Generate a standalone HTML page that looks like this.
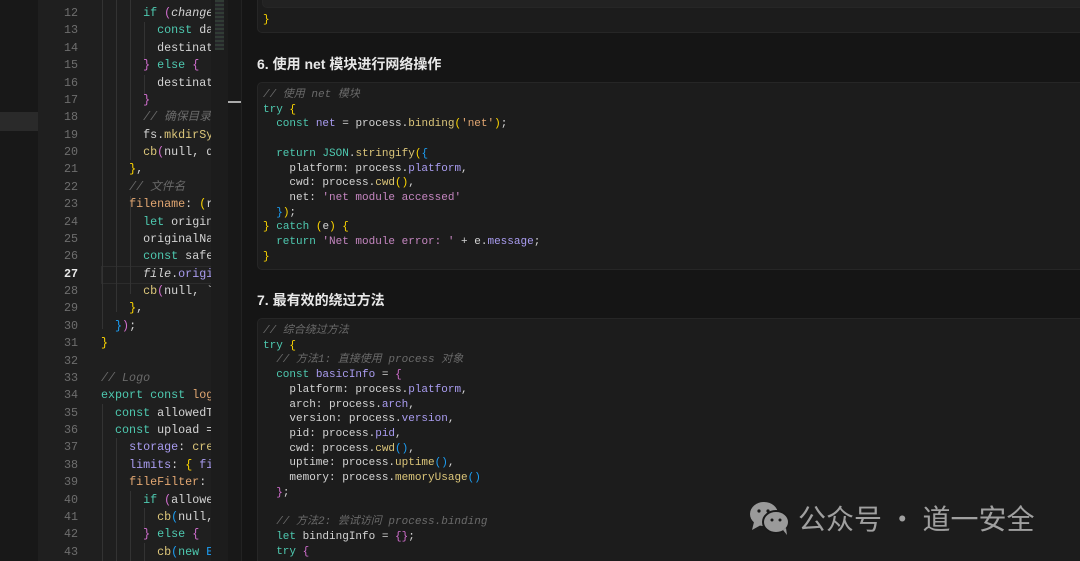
<!DOCTYPE html>
<html style="width:1080px;height:561px;overflow:hidden"><head><meta charset="utf-8"><style>
*{margin:0;padding:0;box-sizing:border-box}
body{width:1080px;height:561px;overflow:hidden;background:#151515;position:relative;font-family:"Liberation Mono","Noto Sans CJK SC",monospace}
.l{position:absolute;white-space:pre}
#side{position:absolute;left:0;top:0;width:38px;height:561px;background:#181818}
#hl{position:absolute;left:0;top:112px;width:38px;height:19px;background:#2a2a2a}
#ed{position:absolute;left:38px;top:0;width:173px;height:561px;background:#1f1f1f;overflow:hidden}
#mm{position:absolute;left:211px;top:0;width:17px;height:561px;background:#1c1c1c}
#sb{position:absolute;left:228px;top:0;width:14px;height:561px;background:#181818;border-right:1px solid #222}
.ln{position:absolute;left:0;width:40px;text-align:right;color:#6e6e6e;font-size:11.7px;line-height:17.37px}
.ec{position:absolute;left:63px;font-size:11.7px;line-height:17.37px;color:#d4d4d4;white-space:pre}
.k{color:#4ec9b0}.p{color:#e2a772}.v{color:#a99cf0}.f{color:#dcc67a}.c{color:#6a6a6a;font-style:italic}
.y{color:#ffd700}.m{color:#d36fd0}.b{color:#1c9ff5}.s{color:#c586c0}
.box{position:absolute;left:257px;width:830px;background:#1c1c1c;border:1px solid #262626;border-radius:5px}
.rc{position:absolute;left:263px;font-size:11px;line-height:14.7px;color:#d4d4d4;white-space:pre}
h3{position:absolute;left:257px;font-family:"Liberation Sans","Noto Sans CJK SC",sans-serif;font-size:14px;font-weight:bold;color:#e8e8e8}
.g{position:absolute;width:1px;background:#333}
</style></head><body>
<div id="side"></div><div id="hl"></div>
<div id="ed">
<div class="ln" style="top:5px">12<br>13<br>14<br>15<br>16<br>17<br>18<br>19<br>20<br>21<br>22<br>23<br>24<br>25<br>26<br><span style="color:#e8e8e8;font-weight:bold">27</span><br>28<br>29<br>30<br>31<br>32<br>33<br>34<br>35<br>36<br>37<br>38<br>39<br>40<br>41<br>42<br>43</div>
<div style="position:absolute;left:63px;top:266px;width:120px;height:18px;border:1px solid #2c2c2c;border-right:none"></div>
<div class="g" style="left:64px;top:0;height:329px"></div>
<div class="g" style="left:78px;top:0;height:312px"></div>
<div class="g" style="left:92px;top:0;height:160px"></div>
<div class="g" style="left:92px;top:196px;height:98px"></div>
<div class="g" style="left:106px;top:22px;height:38px"></div>
<div class="g" style="left:106px;top:75px;height:20px"></div>
<div class="g" style="left:64px;top:404px;height:157px"></div>
<div class="g" style="left:78px;top:438px;height:123px"></div>
<div class="g" style="left:92px;top:491px;height:70px"></div>
<div class="g" style="left:106px;top:508px;height:20px"></div>
<div class="g" style="left:106px;top:543px;height:18px"></div>
<div class="ec" style="top:5px">      <span class="k">if</span> <span class="m">(</span><i>changed</i>
        <span class="k">const</span> da
        destinat
      <span class="m">}</span> <span class="k">else</span> <span class="m">{</span>
        destinat
      <span class="m">}</span>
      <span class="c">// 确保目录</span>
      fs.<span class="f">mkdirSy</span>
      <span class="f">cb</span><span class="m">(</span>null, d
    <span class="y">}</span>,
    <span class="c">// 文件名</span>
    <span class="p">filename</span>: <span class="y">(</span>r
      <span class="k">let</span> origin
      originalNa
      <span class="k">const</span> safe
      <i>file</i>.<span class="v">origi</span>
      <span class="f">cb</span><span class="m">(</span>null, `
    <span class="y">}</span>,
  <span class="b">}</span><span class="m">)</span>;
<span class="y">}</span>

<span class="c">// Logo</span>
<span class="k">export const</span> <span class="p">log</span>
  <span class="k">const</span> allowedT
  <span class="k">const</span> upload =
    <span class="v">storage</span>: <span class="f">cre</span>
    <span class="v">limits</span>: <span class="y">{</span> <span class="v">fi</span>
    <span class="p">fileFilter</span>:
      <span class="k">if</span> <span class="m">(</span>allowe
        <span class="f">cb</span><span class="b">(</span>null,
      <span class="m">}</span> <span class="k">else</span> <span class="m">{</span>
        <span class="f">cb</span><span class="b">(</span><span class="k">new</span> <span class="b">E</span></div>
</div>
<div id="mm"><div style="position:absolute;left:4px;top:0;width:9px;height:50px;background:repeating-linear-gradient(#3a4a40 0 2px,#2a2a30 2px 4px);opacity:.7"></div></div>
<div id="sb"><div style="position:absolute;left:0;top:101px;width:13px;height:2px;background:#aaa"></div></div>

<div class="box" style="top:-10px;height:43px"></div>
<div class="box" style="top:-10px;height:18px;left:262px;background:#222"></div>
<div class="rc" style="top:13px"><span class="y">}</span></div>

<h3 style="top:54px">6. 使用 net 模块进行网络操作</h3>
<div class="box" style="top:82px;height:188px"></div>
<div class="rc" style="top:88px"><span class="c">// 使用 net 模块</span>
<span class="k">try</span> <span class="y">{</span>
  <span class="k">const</span> <span class="v">net</span> = process.<span class="f">binding</span><span class="y">(</span><span class="p">'net'</span><span class="y">)</span>;

  <span class="k">return</span> <span class="k">JSON</span>.<span class="f">stringify</span><span class="y">(</span><span class="b">{</span>
    platform: process.<span class="v">platform</span>,
    cwd: process.<span class="f">cwd</span><span class="y">()</span>,
    net: <span class="s">'net module accessed'</span>
  <span class="b">}</span><span class="y">)</span>;
<span class="y">}</span> <span class="k">catch</span> <span class="y">(</span>e<span class="y">)</span> <span class="y">{</span>
  <span class="k">return</span> <span class="s">'Net module error: '</span> + e.<span class="v">message</span>;
<span class="y">}</span></div>

<h3 style="top:290px">7. 最有效的绕过方法</h3>
<div class="box" style="top:318px;height:243px;border-bottom:none;border-radius:5px 5px 0 0"></div>
<div class="rc" style="top:324px"><span class="c">// 综合绕过方法</span>
<span class="k">try</span> <span class="y">{</span>
  <span class="c">// 方法1: 直接使用 process 对象</span>
  <span class="k">const</span> <span class="v">basicInfo</span> = <span class="m">{</span>
    platform: process.<span class="v">platform</span>,
    arch: process.<span class="v">arch</span>,
    version: process.<span class="v">version</span>,
    pid: process.<span class="v">pid</span>,
    cwd: process.<span class="f">cwd</span><span class="b">()</span>,
    uptime: process.<span class="f">uptime</span><span class="b">()</span>,
    memory: process.<span class="f">memoryUsage</span><span class="b">()</span>
  <span class="m">}</span>;

  <span class="c">// 方法2: 尝试访问 process.binding</span>
  <span class="k">let</span> bindingInfo = <span class="m">{}</span>;
  <span class="k">try</span> <span class="m">{</span></div>

<svg style="position:absolute;left:748px;top:500px" width="44" height="36" viewBox="0 0 44 36">
<ellipse cx="16" cy="14" rx="14" ry="12" fill="#9a9a9a"/><path d="M6 22 L4 30 L13 25Z" fill="#9a9a9a"/>
<ellipse cx="28" cy="22" rx="13" ry="11" fill="#9a9a9a" stroke="#191919" stroke-width="2"/><path d="M35 30 L39 35 L38 28Z" fill="#9a9a9a"/>
<circle cx="11" cy="11" r="1.6" fill="#191919"/><circle cx="20" cy="11" r="1.6" fill="#191919"/>
<circle cx="24" cy="20" r="1.5" fill="#191919"/><circle cx="32" cy="20" r="1.5" fill="#191919"/></svg>
<div class="l" style="left:798px;top:498px;font-family:'Noto Sans CJK SC',sans-serif;font-size:28px;color:#a0a0a0;letter-spacing:0px">公众号 · 道一安全</div>
</body></html>
